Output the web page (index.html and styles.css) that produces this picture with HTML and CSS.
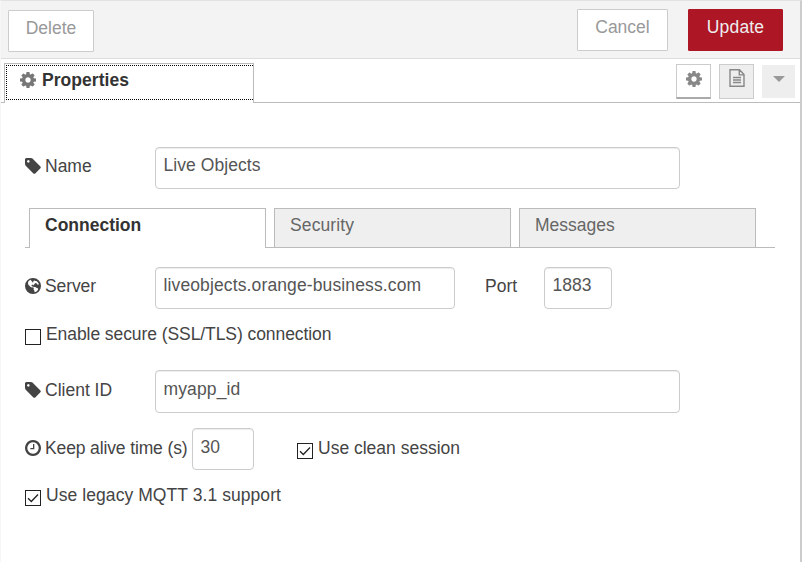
FILE: index.html
```html
<!DOCTYPE html>
<html lang="en">
<head>
<meta charset="utf-8">
<title>Properties</title>
<link rel="stylesheet" href="styles.css">
</head>
<body>
<svg class="defs" width="0" height="0">
  <symbol id="cog" viewBox="128 128 1536 1536"><path d="M1152 896q0-106-75-181t-181-75-181 75-75 181 75 181 181 75 181-75 75-181zm512-109v222q0 12-8 23t-20 13l-185 28q-19 54-39 91 35 50 107 138 10 12 10 25t-9 23q-27 37-99 108t-94 71q-12 0-26-9l-138-108q-44 23-91 38-16 136-29 186-7 28-36 28h-222q-14 0-24.500-8.500t-11.500-21.500l-28-184q-49-16-90-37l-141 107q-10 9-25 9-14 0-25-11-126-114-165-168-7-10-7-23 0-12 8-23 15-21 51-66.500t54-70.500q-27-50-41-99l-183-27q-13-2-21-12.500t-8-23.500v-222q0-12 8-23t19-13l186-28q14-46 39-92-40-57-107-138-10-12-10-24 0-10 9-23 26-36 98.500-107.500t94.500-71.500q13 0 26 10l138 107q44-23 91-38 16-136 29-186 7-28 36-28h222q14 0 24.500 8.500t11.500 21.500l28 184q49 16 90 37l142-107q9-9 24-9 13 0 25 10 129 119 165 170 7 8 7 22 0 12-8 23-15 21-51 66.500t-54 70.500q26 50 41 98l183 28q13 2 21 12.500t8 23.500z"/></symbol>
  <symbol id="tag" viewBox="128 128 1536 1536"><path d="M576 448q0-53-37.500-90.500t-90.500-37.500-90.500 37.500-37.500 90.500 37.500 90.500 90.500 37.500 90.500-37.500 37.500-90.500zm1067 576q0 53-37 90l-491 492q-39 37-91 37-53 0-90-37l-715-716q-38-37-64.500-101t-26.500-117v-416q0-52 38-90t90-38h416q53 0 117 26.500t102 64.500l715 714q37 39 37 91z"/></symbol>
  <symbol id="clock" viewBox="128 128 1536 1536"><path d="M1024 544v448q0 14-9 23t-23 9h-320q-14 0-23-9t-9-23v-64q0-14 9-23t23-9h224v-352q0-14 9-23t23-9h64q14 0 23 9t9 23zm416 352q0-148-73-273t-198-198-273-73-273 73-198 198-73 273 73 273 198 198 273 73 273-73 198-198 73-273zm224 0q0 209-103 385.500t-279.500 279.500-385.500 103-385.500-103-279.500-279.500-103-385.500 103-385.500 279.500-279.500 385.500-103 385.500 103 279.500 279.500 103 385.500z"/></symbol>
  <symbol id="globe" viewBox="0 0 16 16"><path fill-rule="evenodd" d="M8 0a8 8 0 1 1 0 16A8 8 0 0 1 8 0zM5.500 1.800L3.600 3.100 2.900 5l.6 1.900 1.200 1 .8 1 1.500.6 1-.2.900.8-.4 1.100.8 1.300.3 1.800 2-.9 1.400-1.700.2-1.300-1.400-.5-1.500-1-1.400.1-1-.6-.9.200-.6-.9.600-1 1.300.1.700.8.200-1.400 1.300-1.200 1 .3.800 1.200 1.200.3.200-1.200-1.100-1.500-1.200-1.200-1.100.2-.9-.6-1.200.4.400 1.200-.9.500-.7-1.200z"/></symbol>
  <symbol id="check" viewBox="0 0 16 16"><path d="M3 8.200l3.300 3.300 6.700-7" fill="none" stroke="#222" stroke-width="1.300"/></symbol>
</svg>
<div class="panel">
  <header class="toolbar">
    <button class="btn delete"><span>Delete</span></button>
    <button class="btn cancel"><span>Cancel</span></button>
    <button class="btn primary"><span>Update</span></button>
  </header>
  <nav class="header">
    <div class="title-tab"><div class="focus"><svg class="icon"><use href="#cog"/></svg><b>Properties</b></div></div>
    <div class="tools">
      <div class="tool active"><svg class="icon"><use href="#cog"/></svg></div>
      <div class="tool"><svg class="doc" viewBox="0 0 16 18"><path d="M1 .7h9.500L15 5.500v11.800H1zM10.300 1v4.900H15M4 8.500h8M4 11h8M4 13.500h8" fill="none" stroke="currentColor" stroke-width="1.400"/></svg></div>
      <div class="tool plain"><i class="caret"></i></div>
    </div>
  </nav>
  <main class="form">
    <div class="row name">
      <label><svg class="icon"><use href="#tag"/></svg><span>Name</span></label>
      <div class="input wide"><span class="t-live">Live Objects</span></div>
    </div>
    <div class="tabs">
      <div class="tab selected"><span>Connection</span></div>
      <div class="tab"><span class="t-sec">Security</span></div>
      <div class="tab"><span>Messages</span></div>
    </div>
    <div class="row server">
      <label><svg class="icon"><use href="#globe"/></svg><span class="t-server">Server</span></label>
      <div class="input host"><span class="t-host">liveobjects.orange-business.com</span></div>
      <span class="port-label">Port</span>
      <div class="input port"><span>1883</span></div>
    </div>
    <div class="check-row secure"><i class="box"></i><span class="t-ssl">Enable secure (SSL/TLS) connection</span></div>
    <div class="row client">
      <label><svg class="icon"><use href="#tag"/></svg><span>Client ID</span></label>
      <div class="input wide tall"><span class="t-myapp">myapp_id</span></div>
    </div>
    <div class="row alive">
      <label class="long"><svg class="icon"><use href="#clock"/></svg><span class="t-keep">Keep alive time (s)</span></label>
      <div class="input secs"><span>30</span></div>
      <div class="check-row clean"><i class="box"><svg><use href="#check"/></svg></i><span>Use clean session</span></div>
    </div>
    <div class="check-row legacy"><i class="box"><svg><use href="#check"/></svg></i><span class="t-legacy">Use legacy MQTT 3.1 support</span></div>
  </main>
</div>
</body>
</html>
```
FILE: styles.css
```css
* { box-sizing: border-box; }
body { margin: 0; font: 17.5px/20px "Liberation Sans", Arial, sans-serif; color: #444; background: #fff; white-space: nowrap; }
.defs { display: block; height: 0; }
.panel { width: 802px; height: 562px; border-top: 1px solid #e2e2e2; border-right: 2px solid #ccc; border-left: 1px solid #f6f6f6; overflow: hidden; }
.icon { width: 16px; height: 16px; fill: currentColor; flex: none; display: block; }

.toolbar { height: 58px; background: #f3f3f3; border-bottom: 1px solid #ddd; display: flex; align-items: flex-start; padding: 8px 17px 0 7px; }
.btn { height: 42px; margin: 0; padding: 7px 0 0; border: 1px solid #ccc; border-radius: 1px; background: #fff; color: #999; font: inherit; display: flex; justify-content: center; align-items: flex-start; }
.delete { width: 86px; margin: 1px auto 0 0; }
.cancel { width: 91px; margin-right: 20px; }
.primary { width: 95px; border-color: #ad1625; background: #ad1625; color: #eee; letter-spacing: .15px; }

.header { height: 44px; border-bottom: 1px solid #bbb; display: flex; justify-content: space-between; padding: 4px 5px 0 3px; }
.title-tab { width: 250px; height: 40px; background: #fff; border: 1px solid #bbb; border-bottom: 0; padding: 1px 0 0 1px; }
.focus { height: 35px; border: 1px dotted #000; border-right: 0; display: flex; padding: 4px 0 0 13px; color: #777; }
.focus .icon { margin-top: 2px; }
.focus b { margin-left: 6px; color: #333; letter-spacing: .05px; }
.tools { display: flex; gap: 8px; padding-top: 1px; }
.tool { width: 35px; height: 35px; border: 1px solid #ccc; background: #eee; color: #888; display: flex; justify-content: center; padding-top: 4px; }
.tool.active { background: #fff; border-bottom: 2px solid #aaa; padding-top: 6px; }
.tool.plain { width: 33px; height: 33px; border: 0; margin-top: 1px; padding-top: 11px; }
.doc { width: 16px; height: 18px; }
.caret { width: 0; height: 0; border: 6px solid transparent; border-top-color: #999; border-bottom: 0; }

.form { padding: 44px 0 0 24px; }
.row { display: flex; height: 42px; }
label { width: 130px; display: flex; padding-top: 9px; }
label .icon { margin: 2px 4px 0 0; }
.input { height: 42px; border: 1px solid #ccc; border-radius: 4px; box-shadow: inset 0 1px 1px rgba(0,0,0,.075); padding: 7px 0 0 7.500px; color: #555; background: #fff; }
.wide { width: 525px; }
.tall { height: 43px; }
.host { width: 300px; }
.port-label { width: 59px; margin-left: 30px; padding-top: 9px; }
.port { width: 68px; }
.secs { width: 62px; padding-top: 8px; }
.long { width: 167px; }
.t-live { letter-spacing: .06px; }
.t-sec { letter-spacing: .12px; }
.t-server { letter-spacing: -.1px; }
.t-host { letter-spacing: .125px; }
.t-ssl { letter-spacing: -.075px; }
.t-myapp { letter-spacing: .12px; }
.t-keep { letter-spacing: -.13px; }
.t-legacy { letter-spacing: .07px; }

.tabs { width: 750px; height: 40px; margin-top: 19px; padding-left: 4px; display: flex; gap: 8px; border-bottom: 1px solid #bbb; }
.tab { width: 237px; height: 39px; border: 1px solid #bbb; border-bottom: 0; background: #efefef; color: #666; padding: 6px 0 0 15px; }
.selected { height: 40px; background: #fff; color: #333; font-weight: bold; }

.server { margin-top: 19px; }
.check-row { display: flex; height: 22px; }
.box { width: 16px; height: 16px; border: 1px solid #222; background: #fff; margin: 4px 5px 0 0; flex: none; display: block; }
.box svg { width: 16px; height: 16px; margin: -1px; display: block; }
.check-row span { margin-top: -1px; }
.secure { margin-top: 16px; }
.client { margin-top: 23px; }
.client label, .alive label { padding-top: 10px; }
.client .input { padding-top: 8px; }
.alive { margin-top: 16px; }
.clean { margin: 11px 0 0 43px; }
.legacy { margin-top: 16px; }
```
